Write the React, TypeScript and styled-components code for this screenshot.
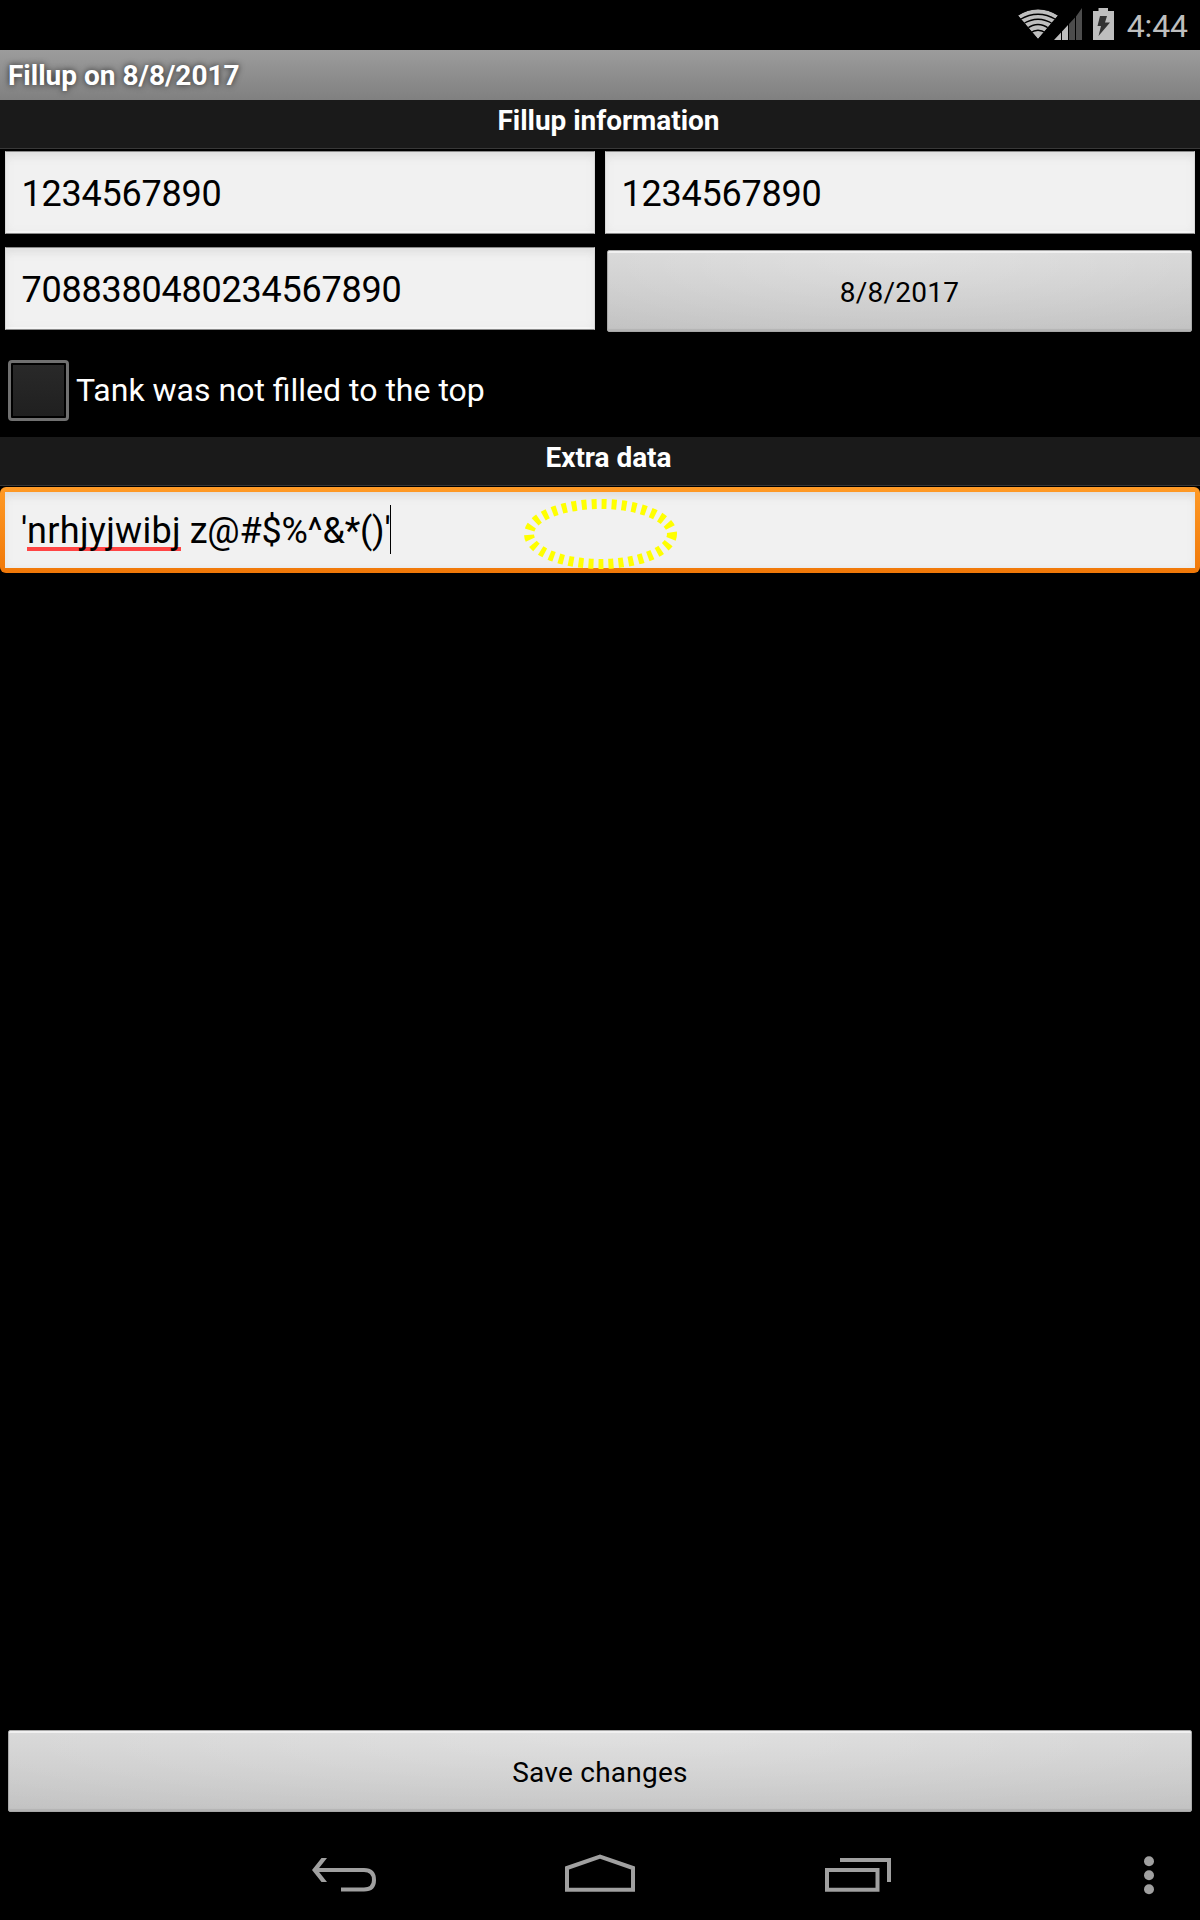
import React from "react";
import styled, { createGlobalStyle } from "styled-components";

const GlobalStyle = createGlobalStyle`
  body { margin: 0; background: #000; }
  * { box-sizing: border-box; }
`;

const Screen = styled.div`
  width: 1200px;
  height: 1920px;
  display: flex;
  flex-direction: column;
  background: #000;
  color: #fff;
  font-family: Roboto, "Liberation Sans", sans-serif;
  overflow: hidden;
`;

const StatusBar = styled.header`
  height: 50px;
  flex: none;
  display: flex;
  justify-content: flex-end;
  padding-right: 12px;
`;

const StatusIcons = styled.svg`
  width: 100px;
  height: 50px;
  margin-right: 9px;
`;

const Clock = styled.time`
  font-size: 32px;
  line-height: 52px;
  letter-spacing: -0.1px;
  color: #bebebe;
`;

const TitleBar = styled.h1`
  flex: none;
  height: 50px;
  margin: 0;
  padding-left: 8px;
  background: linear-gradient(#9c9c9c, #808080);
  font-size: 28px;
  font-weight: 700;
  line-height: 51px;
  text-shadow: 0 0 6px rgba(0, 0, 0, 0.75);
`;

const SectionHeader = styled.h2`
  flex: none;
  height: 49px;
  margin: 0;
  padding-left: 17px;
  background: #1a1a1a;
  border-bottom: 1px solid #383838;
  font-size: 28px;
  font-weight: 700;
  line-height: 41px;
  letter-spacing: -0.05px;
  text-align: center;
`;

const Fields = styled.div`
  display: grid;
  grid-template-columns: 590px 590px;
  grid-template-rows: 83px 83px;
  column-gap: 10px;
  row-gap: 13px;
  padding: 2px 5px 0;
`;

const Field = styled.div`
  display: flex;
  align-items: center;
  padding: 3px 0 0 15.5px;
  background: #f1f1f1;
  border: 1px solid #d8d8d8;
  border-top-color: #8a8a8a;
  border-bottom-color: #8a8a8a;
  box-shadow: inset 0 10px 10px -6px #dedede, inset 0 0 8px #e6e6e6, inset 0 -2px 0 #fff;
  color: #000;
  font-size: 36px;
  letter-spacing: -0.23px;
`;

const Button = styled.button<{ $wide?: boolean }>`
  height: 82px;
  margin: ${(p) => (p.$wide ? "0 8px" : "3px 3px 0 2px")};
  padding: 2px 0 0;
  border: 1px solid #a8a8a8;
  border-radius: 2px;
  background: radial-gradient(ellipse 75% 130% at 50% 0, rgba(255, 255, 255, 0.28), transparent),
    linear-gradient(#d6d6d6, #c2c2c2);
  box-shadow: inset 0 2px 0 #f0f0f0, inset 0 -2px 1px #b4b4b4;
  color: #000;
  font: 28px Roboto, "Liberation Sans", sans-serif;
  letter-spacing: 0.25px;
`;

const CheckRow = styled.label`
  display: flex;
  align-items: center;
  height: 107px;
  padding: 13px 8px 0;
  gap: 7px;
  font-size: 32px;
`;

const CheckBox = styled.span`
  width: 61px;
  height: 61px;
  border: 3px solid #707070;
  border-radius: 4px;
  background: linear-gradient(#292929, #202020) content-box;
  padding: 2px;
`;

const FocusedField = styled.div`
  position: relative;
  flex: none;
  height: 86px;
  margin-top: 1px;
  padding: 5px;
  border-radius: 6px;
  background: linear-gradient(#ff9a26, #f07808);
`;

const FocusedInner = styled.div`
  height: 76px;
  display: flex;
  align-items: center;
  padding: 1px 0 0 16px;
  background: #f1f1f1;
  box-shadow: inset 0 10px 10px -6px #dedede, inset 0 0 8px #e6e6e6;
  color: #000;
  font-size: 36px;
  letter-spacing: -0.2px;
  white-space: pre;
`;

const Misspelled = styled.span`
  letter-spacing: 0.3px;
  background: linear-gradient(#ff4444, #ff4444) 0 37px / 100% 4px no-repeat;
`;

const Caret = styled.span`
  width: 1px;
  height: 49px;
  margin-bottom: 3px;
  background: #000;
`;

const TouchRing = styled.svg`
  position: absolute;
  left: 516px;
  top: 1px;
  width: 170px;
  height: 90px;
`;

const Spacer = styled.div`
  flex: 1;
`;

const NavBar = styled.nav`
  flex: none;
  height: 96px;
  margin-top: 12px;
  svg { display: block; }
`;

export default function App() {
  return (
    <>
      <GlobalStyle />
      <Screen>
        <StatusBar>
          <StatusIcons viewBox="1018 0 100 50">
            <clipPath id="fan">
              <path d="M1038 39 L1018 15.5 Q1038 3 1058 15.5 Z" />
            </clipPath>
            <g clipPath="url(#fan)">
              <path d="M1038 39 L1018 15.5 Q1038 3 1058 15.5 Z" fill="#bebebe" />
              <g fill="none" stroke="#000" strokeWidth="1.3">
                <path d="M1020 19.5 Q1038 9 1056 19.5" />
                <path d="M1023 24 Q1038 14.5 1053 24" />
                <path d="M1027 28.5 Q1038 20.5 1049 28.5" />
                <path d="M1030 33 Q1038 27.5 1046 33" />
              </g>
            </g>
            <path d="M1054 40 L1061 32.5 V40 Z M1062 31.5 L1068 25 V40 H1062 Z" fill="#bebebe" />
            <path d="M1069 24 L1075 17.5 V40 H1069 Z M1076 16.5 L1082 8 V40 H1076 Z" fill="#4c4c4c" />
            <path d="M1093 11 H1098.500 V8 H1108 V11 H1114 V40 H1093 Z" fill="#bebebe" />
            <path d="M1100 16 H1107 L1105 22.500 H1110 L1098.500 36 L1101 26 H1097.500 Z" fill="#333" />
          </StatusIcons>
          <Clock>4:44</Clock>
        </StatusBar>
        <TitleBar>Fillup on 8/8/2017</TitleBar>
        <SectionHeader>Fillup information</SectionHeader>
        <Fields>
          <Field>1234567890</Field>
          <Field>1234567890</Field>
          <Field>7088380480234567890</Field>
          <Button>8/8/2017</Button>
        </Fields>
        <CheckRow>
          <CheckBox />
          Tank was not filled to the top
        </CheckRow>
        <SectionHeader>Extra data</SectionHeader>
        <FocusedField>
          <FocusedInner>
            '<Misspelled>nrhjyjwibj</Misspelled> z@#$%^&amp;*()'
            <Caret />
          </FocusedInner>
          <TouchRing viewBox="516 488 170 90">
            <ellipse cx="600.5" cy="534" rx="71.5" ry="30" fill="none" stroke="#ff0" strokeWidth="10" strokeDasharray="5 5" />
          </TouchRing>
        </FocusedField>
        <Spacer />
        <Button $wide>Save changes</Button>
        <NavBar>
          <svg width="1200" height="96" viewBox="0 1824 1200 96" fill="none" stroke="#a0a0a0" strokeWidth="4">
            <path d="M317 1870 H364 Q374 1870 374 1880 Q374 1889.500 364 1889.500 H341" />
            <path d="M312 1870 L321.500 1858 H327 L317.500 1870 L327 1882 H321.500 Z" fill="#a0a0a0" stroke="none" />
            <path d="M567 1889.700 V1868 L600 1856.500 L633 1868 V1889.700 Z" />
            <path d="M827 1870 H877.500 V1889.700 H827 Z M840 1860 H889 V1882" />
            <g fill="#a0a0a0" stroke="none">
              <circle cx="1149" cy="1861.300" r="5" />
              <circle cx="1149" cy="1875.300" r="5" />
              <circle cx="1149" cy="1889.300" r="5" />
            </g>
          </svg>
        </NavBar>
      </Screen>
    </>
  );
}
